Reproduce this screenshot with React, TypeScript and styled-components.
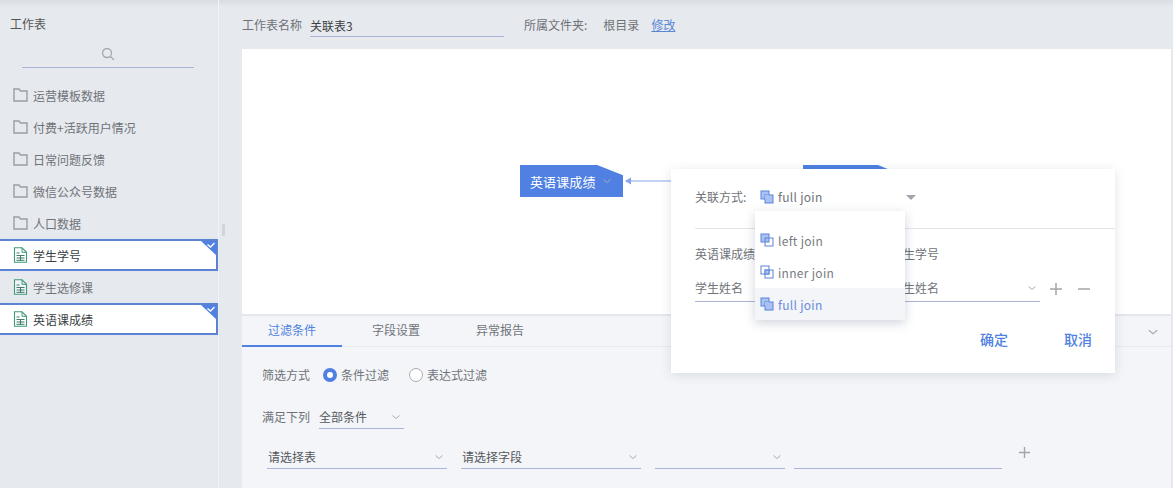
import React from "react";
import styled, { createGlobalStyle } from "styled-components";

const Global = createGlobalStyle`
  html, body { margin: 0; padding: 0; height: 100%; }
  body { font-family: "Noto Sans CJK SC", "Inter", sans-serif; font-size: 12px; color: #666; overflow: hidden; background: #e6e9ee; }
  #root { height: 100%; }
  * { box-sizing: border-box; }
`;

const Page = styled.div`
  position: relative;
  width: 1173px;
  height: 488px;
  display: flex;
  overflow: hidden;
  background: linear-gradient(#d9dde4 0, #e6e9ee 7px);
`;
const Sidebar = styled.aside`
  width: 219px;
  flex: none;
  border-right: 1px solid #f1f3f6;
  display: flex;
  flex-direction: column;
`;
const SideTitle = styled.div`
  height: 47px;
  padding: 15px 0 0 10px;
  font-size: 12px;
  line-height: 18px;
  color: #555;
`;
const SearchBox = styled.div`
  width: 172px;
  height: 21px;
  margin: 0 0 11px 22px;
  border-bottom: 1px solid #a9b4d6;
  display: flex;
  justify-content: center;
  align-items: flex-start;
  color: #a5a9ae;
`;
const Row = styled.div<{ $selected?: boolean }>`
  position: relative;
  height: 32px;
  width: 218px;
  display: flex;
  align-items: center;
  gap: 5px;
  padding-left: 13px;
  font-size: 12px;
  color: ${(p) => (p.$selected ? "#3c3f44" : "#6f7378")};
  background: ${(p) => (p.$selected ? "#fff" : "transparent")};
  border: ${(p) => (p.$selected ? "2px solid #5c83d0" : "0")};
  border-left: 0;
  box-shadow: ${(p) => (p.$selected ? "0 0 3px #dbe6f8" : "none")};
`;
const Corner = styled.span`
  position: absolute;
  top: 0;
  right: 0;
  width: 15px;
  height: 14px;
  display: block;
`;
const Splitter = styled.div`
  width: 23px;
  flex: none;
  padding: 224px 0 0 3px;
`;
const Handle = styled.div`
  width: 3px;
  height: 12px;
  background: #d2d6dc;
`;
const Main = styled.main`
  flex: 1;
  min-width: 0;
  padding-right: 2px;
  display: flex;
  flex-direction: column;
`;
const Header = styled.header`
  height: 49px;
  flex: none;
  display: flex;
  align-items: flex-start;
  padding-top: 16px;
  line-height: 18px;
  color: #6f7378;
`;
const NameInput = styled.div`
  width: 194px;
  height: 21px;
  margin: 0 20px 0 8px;
  border-bottom: 1px solid #a9b4d6;
  color: #3c3f44;
  padding-top: 1px;
`;
const FolderLabel = styled.span`
  margin-right: 16px;
`;
const FolderValue = styled.span`
  margin-right: 12px;
`;
const Link = styled.a`
  color: #5b85d8;
  text-decoration: underline;
`;
const Canvas = styled.section`
  position: relative;
  height: 265px;
  flex: none;
  background: #fff;
`;
const Node = styled.div<{ $x: number; $w: number }>`
  position: absolute;
  left: ${(p) => p.$x}px;
  top: 116px;
  width: ${(p) => p.$w}px;
  height: 32px;
  padding-left: 10px;
  display: flex;
  align-items: center;
  gap: 6px;
  color: #fff;
  font-size: 13px;
  letter-spacing: 0.1px;
  background: #4f80e2;
  clip-path: polygon(0 0, 75% 0, 100% 32%, 100% 100%, 0 100%);
`;
const ArrowLine = styled.svg`
  position: absolute;
  left: 382px;
  top: 127px;
`;
const Panel = styled.section`
  flex: 1;
  margin-top: 1px;
  background: #f3f5f8;
  display: flex;
  flex-direction: column;
  border-top: 1px solid #e2e5ea;
`;
const Tabs = styled.div`
  height: 31px;
  flex: none;
  display: flex;
  border-bottom: 1px solid #e6e9ee;
  position: relative;
  padding-right: 12px;
`;
const Tab = styled.div<{ $active?: boolean }>`
  height: 31px;
  padding: 5px 26px 0;
  margin-right: 4px;
  line-height: 18px;
  color: ${(p) => (p.$active ? "#4f80e2" : "#707479")};
  border-bottom: 2px solid ${(p) => (p.$active ? "#4f80e2" : "transparent")};
`;
const TabChevron = styled.span`
  margin-left: auto;
  padding-top: 8px;
  color: #aab0b8;
`;
const FilterBody = styled.div`
  padding: 19px 0 0 20px;
  color: #6f7378;
`;
const RadioRow = styled.div`
  height: 18px;
  display: flex;
  align-items: center;
  line-height: 18px;
  margin-bottom: 22px;
`;
const RadioLabel = styled.span`
  margin-right: 13px;
`;
const Radio = styled.span<{ $on?: boolean }>`
  width: 14px;
  height: 14px;
  border-radius: 50%;
  background: #fff;
  border: ${(p) => (p.$on ? "4px solid #4f80e2" : "1px solid #a8acb2")};
  margin-right: 4px;
  flex: none;
`;
const RadioText = styled.span`
  margin-right: 20px;
`;
const ConditionRow = styled.div`
  display: flex;
  align-items: flex-start;
  height: 24px;
  margin-bottom: 16px;
`;
const ConditionLabel = styled.span`
  line-height: 18px;
  margin: 2px 9px 0 0;
`;
const Select = styled.div<{ $w: number; $ml?: number }>`
  width: ${(p) => p.$w}px;
  margin-left: ${(p) => p.$ml ?? 0}px;
  height: 23px;
  flex: none;
  border-bottom: 1px solid #a9b4d6;
  display: flex;
  align-items: center;
  justify-content: space-between;
  color: #55585d;
  line-height: 18px;
  padding-right: 3px;
`;
const CondSelectText = styled.span`
  padding-left: 1px;
`;
const Chevron = styled.svg`
  color: #a8adb4;
  flex: none;
`;
const PlusBtn = styled.span<{ $ml: number }>`
  margin-left: ${(p) => p.$ml}px;
  display: flex;
  align-items: center;
  color: #a2a5aa;
`;

const Dialog = styled.div`
  position: absolute;
  left: 671px;
  top: 169px;
  width: 444px;
  height: 204px;
  background: #fff;
  box-shadow: 0 2px 10px rgba(70, 85, 110, 0.16);
  padding: 19px 0 0 24px;
  color: #6f7378;
`;
const JoinRow = styled.div`
  height: 41px;
  display: flex;
  align-items: flex-start;
  line-height: 18px;
  border-bottom: 1px solid #e3e5e9;
`;
const JoinLabel = styled.span`
  width: 65px;
  flex: none;
`;
const JoinValue = styled.span`
  display: flex;
  align-items: center;
  gap: 4px;
  height: 18px;
  letter-spacing: 0.3px;
`;
const Caret = styled.span`
  margin: 7px 0 0 83px;
  width: 0;
  height: 0;
  border-left: 5px solid transparent;
  border-right: 5px solid transparent;
  border-top: 5px solid #a2a6ac;
`;
const FieldLabels = styled.div`
  display: grid;
  grid-template-columns: 196px 160px;
  line-height: 18px;
  padding-top: 16px;
  height: 46px;
`;
const FieldRow = styled.div`
  display: flex;
  align-items: center;
  height: 27px;
`;
const FieldSelect = styled.div<{ $w: number; $ml?: number }>`
  width: ${(p) => p.$w}px;
  margin-left: ${(p) => p.$ml ?? 0}px;
  height: 27px;
  border-bottom: 1px solid #a9b4d6;
  display: flex;
  align-items: center;
  justify-content: space-between;
  padding-right: 3px;
  flex: none;
  line-height: 18px;
`;
const DialogActions = styled.div`
  display: flex;
  justify-content: flex-end;
  gap: 56px;
  padding: 27px 23px 0 0;
`;
const ActionBtn = styled.span`
  font-size: 14px;
  line-height: 20px;
  color: #4f80e2;
  font-weight: 500;
`;
const Dropdown = styled.div`
  position: absolute;
  left: 755px;
  top: 211px;
  width: 150px;
  height: 109px;
  padding-top: 13px;
  background: #fff;
  box-shadow: 0 3px 10px rgba(70, 85, 110, 0.25);
`;
const DropItem = styled.div<{ $active?: boolean }>`
  height: 32px;
  display: flex;
  align-items: center;
  gap: 4px;
  padding-left: 5px;
  letter-spacing: 0.3px;
  color: ${(p) => (p.$active ? "#6a8ddb" : "#777b80")};
  background: ${(p) => (p.$active ? "#f3f5f8" : "transparent")};
`;

const ChevronDown = ({ size = 10 }: { size?: number }) => (
  <Chevron width={size} height={size} viewBox="0 0 10 10" fill="none">
    <path d="M1.5 3.5 5 6.5l3.5-3" stroke="currentColor" strokeWidth="1" />
  </Chevron>
);

const Folder = () => (
  <svg width="15" height="14" viewBox="0 0 15 14" fill="none">
    <path d="M1 1h5l1.5 2H14v10H1z" stroke="#9a9ea4" strokeWidth="1.4" />
  </svg>
);

const Sheet = () => (
  <svg width="15" height="16" viewBox="0 0 15 16" fill="none">
    <path d="M1.5 .8h7.5l4.5 4.5v10H1.500z" stroke="#3f9a78" strokeWidth="1.1" fill="#fff" fillOpacity="0.5" />
    <path d="M9 .8v4.500h4.500" stroke="#3f9a78" strokeWidth="1" />
    <path d="M3.500 6h3M3.500 8.500h8M3.500 11h8M3.500 13.300h8M7.500 8v6" stroke="#3a7d69" strokeWidth="1" />
  </svg>
);

const CheckCorner = () => (
  <Corner>
    <svg width="15" height="14" viewBox="0 0 15 14">
      <path d="M0 0h15v14z" fill="#4f80e2" />
      <path d="M6.500 3.500 9.500 6l4-4" fill="none" stroke="#fff" strokeWidth="1.400" />
    </svg>
  </Corner>
);

const JoinIcon = ({ kind }: { kind: "left" | "inner" | "full" }) => (
  <svg width="14" height="14" viewBox="0 0 14 14" fill="none">
    <rect x="1" y="1" width="8" height="8" fill={kind === "inner" ? "#fff" : "#a9c1f3"} stroke="#5a83d8" />
    <rect x="5" y="5" width="8" height="8" fill={kind === "full" ? "#a9c1f3" : "none"} stroke="#5a83d8" />
    {kind === "inner" && <rect x="5" y="5" width="4" height="4" fill="#a9c1f3" stroke="#5a83d8" />}
    {kind === "full" && <rect x="5" y="5" width="4" height="4" fill="#a9c1f3" />}
  </svg>
);

const Plus = ({ size = 14 }: { size?: number }) => (
  <svg width={size} height={size} viewBox="0 0 14 14" fill="none">
    <path d="M7 1v12M1 7h12" stroke="currentColor" strokeWidth="1.500" />
  </svg>
);

const Minus = () => (
  <svg width="14" height="14" viewBox="0 0 14 14" fill="none">
    <path d="M1 7h12" stroke="currentColor" strokeWidth="1.500" />
  </svg>
);

const folders = ["运营模板数据", "付费+活跃用户情况", "日常问题反馈", "微信公众号数据", "人口数据"];
const sheets = [
  { name: "学生学号", selected: true },
  { name: "学生选修课", selected: false },
  { name: "英语课成绩", selected: true },
];

export default function App() {
  return (
    <Page>
      <Global />
      <Sidebar>
        <SideTitle>工作表</SideTitle>
        <SearchBox>
          <svg width="14" height="14" viewBox="0 0 14 14" fill="none">
            <circle cx="6" cy="6" r="4.500" stroke="currentColor" strokeWidth="1.300" />
            <path d="M9.500 9.500 13 13" stroke="currentColor" strokeWidth="1.300" />
          </svg>
        </SearchBox>
        {folders.map((f) => (
          <Row key={f}>
            <Folder />
            {f}
          </Row>
        ))}
        {sheets.map((s) => (
          <Row key={s.name} $selected={s.selected}>
            <Sheet />
            {s.name}
            {s.selected && <CheckCorner />}
          </Row>
        ))}
      </Sidebar>
      <Splitter>
        <Handle />
      </Splitter>
      <Main>
        <Header>
          工作表名称
          <NameInput>关联表3</NameInput>
          <FolderLabel>所属文件夹:</FolderLabel>
          <FolderValue>根目录</FolderValue>
          <Link>修改</Link>
        </Header>
        <Canvas>
          <Node $x={278} $w={103}>
            英语课成绩
            <ChevronDown />
          </Node>
          <ArrowLine width="50" height="10" viewBox="0 0 50 10" fill="none">
            <path d="M2 5h48" stroke="#86a5ea" strokeWidth="1.200" />
            <path d="M7 1.500 1 5l6 3.500z" fill="#86a5ea" />
          </ArrowLine>
          <Node $x={561} $w={100} />
        </Canvas>
        <Panel>
          <Tabs>
            <Tab $active>过滤条件</Tab>
            <Tab>字段设置</Tab>
            <Tab>异常报告</Tab>
            <TabChevron>
              <ChevronDown size={12} />
            </TabChevron>
          </Tabs>
          <FilterBody>
            <RadioRow>
              <RadioLabel>筛选方式</RadioLabel>
              <Radio $on />
              <RadioText>条件过滤</RadioText>
              <Radio />
              <RadioText>表达式过滤</RadioText>
            </RadioRow>
            <ConditionRow>
              <ConditionLabel>满足下列</ConditionLabel>
              <Select $w={85}>
                全部条件
                <ChevronDown />
              </Select>
            </ConditionRow>
            <ConditionRow>
              <Select $w={180} $ml={5}>
                <CondSelectText>请选择表</CondSelectText>
                <ChevronDown />
              </Select>
              <Select $w={180} $ml={14}>
                <CondSelectText>请选择字段</CondSelectText>
                <ChevronDown />
              </Select>
              <Select $w={130} $ml={14}>
                <span />
                <ChevronDown />
              </Select>
              <Select $w={208} $ml={9} />
              <PlusBtn $ml={16}>
                <Plus size={13} />
              </PlusBtn>
            </ConditionRow>
          </FilterBody>
        </Panel>
      </Main>
      <Dialog>
        <JoinRow>
          <JoinLabel>关联方式:</JoinLabel>
          <JoinValue>
            <JoinIcon kind="full" />
            full join
          </JoinValue>
          <Caret />
        </JoinRow>
        <FieldLabels>
          <span>英语课成绩</span>
          <span>学生学号</span>
        </FieldLabels>
        <FieldRow>
          <FieldSelect $w={180}>学生姓名</FieldSelect>
          <FieldSelect $w={149} $ml={16}>
            学生姓名
            <ChevronDown />
          </FieldSelect>
          <PlusBtn $ml={9}>
            <Plus />
          </PlusBtn>
          <PlusBtn $ml={14}>
            <Minus />
          </PlusBtn>
        </FieldRow>
        <DialogActions>
          <ActionBtn>确定</ActionBtn>
          <ActionBtn>取消</ActionBtn>
        </DialogActions>
      </Dialog>
      <Dropdown>
        <DropItem>
          <JoinIcon kind="left" />
          left join
        </DropItem>
        <DropItem>
          <JoinIcon kind="inner" />
          inner join
        </DropItem>
        <DropItem $active>
          <JoinIcon kind="full" />
          full join
        </DropItem>
      </Dropdown>
    </Page>
  );
}
